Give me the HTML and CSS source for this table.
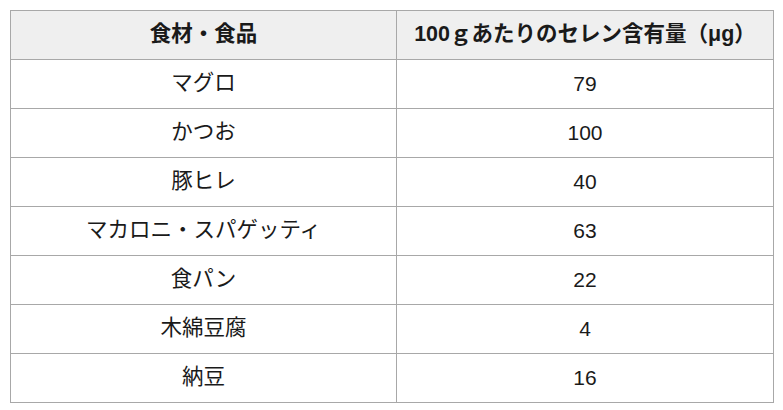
FILE: index.html
```html
<!DOCTYPE html>
<html lang="ja">
<head>
<meta charset="utf-8">
<link rel="stylesheet" href="styles.css">
</head>
<body>
<div class="wrap">
<table class="selen">
  <colgroup><col class="c1"><col class="c2"></colgroup>
  <thead>
    <tr><th>食材・食品</th><th>100ｇあたりのセレン含有量（μg）</th></tr>
  </thead>
  <tbody>
    <tr><td>マグロ</td><td class="num">79</td></tr>
    <tr><td>かつお</td><td class="num">100</td></tr>
    <tr><td>豚ヒレ</td><td class="num">40</td></tr>
    <tr><td>マカロニ・スパゲッティ</td><td class="num">63</td></tr>
    <tr><td>食パン</td><td class="num">22</td></tr>
    <tr><td>木綿豆腐</td><td class="num">4</td></tr>
    <tr><td>納豆</td><td class="num">16</td></tr>
  </tbody>
</table>
</div>
</body>
</html>
```

FILE: styles.css
```css
html, body {
  margin: 0;
  padding: 0;
  background: #ffffff;
}
.wrap {
  padding: 10px 9px 0 10px;
}
.selen {
  border-collapse: collapse;
  width: 764px;
  table-layout: fixed;
  font-family: "Liberation Sans", "Noto Sans CJK JP", sans-serif;
  font-size: 21.5px;
  color: #1a1a1a;
}
.c1 { width: 386px; }
.selen th, .selen td {
  border: 1px solid #a8a8a8;
  height: 48px;
  padding: 0;
  text-align: center;
  vertical-align: middle;
  line-height: 1.2;
}
.selen td.num {
  font-size: 21px;
}
.selen th {
  background: #efefef;
  font-weight: bold;
}
```
